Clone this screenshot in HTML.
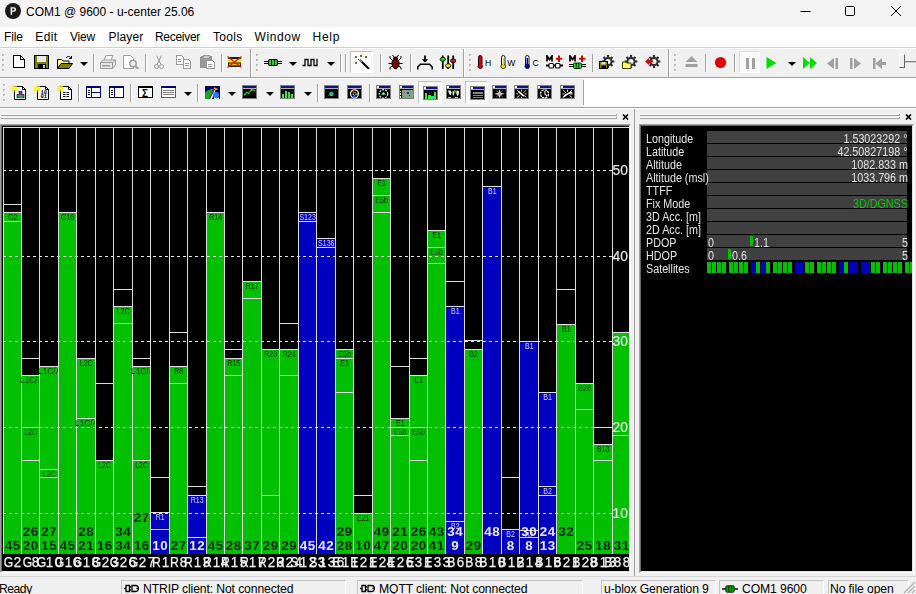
<!DOCTYPE html><html><head><meta charset="utf-8"><title>u-center</title><style>
*{box-sizing:border-box;margin:0;padding:0}
html,body{width:916px;height:594px;overflow:hidden;background:#f0f0f0;font-family:"Liberation Sans",sans-serif;}
.abs{position:absolute}
#root{position:relative;width:916px;height:594px;overflow:hidden;background:#f0f0f0}
#title{left:0;top:0;width:916px;height:27px;background:#f3f3f3}
#title .t{left:26px;top:5px;font-size:12px;letter-spacing:0px;color:#000;white-space:nowrap;line-height:15px}
#menu{left:0;top:27px;width:916px;height:20px;background:#fff}
#menu span{position:absolute;top:2.5px;font-size:12px;letter-spacing:-0.3px;color:#000;line-height:15px;white-space:nowrap}
.sep{position:absolute;width:1px;background:#a0a0a0}
.hl{position:absolute;height:1px;left:0;width:916px}
.grip{position:absolute;width:3px;}
.dd{position:absolute;width:0;height:0;margin-left:-0.5px;border-left:4px solid transparent;border-right:4px solid transparent;border-top:4.5px solid #000}
.ico{position:absolute}
#chart{left:2px;top:126px;width:627px;height:445px;background:#000;overflow:hidden}
.vl{position:absolute;top:1px;width:1px;height:427px;background:#dedede}
.hln{position:absolute;height:1px;background:#dedede}
.bar{position:absolute}
.dash{position:absolute;left:1px;height:1px;width:609px;background:repeating-linear-gradient(90deg,#e8e8e8 0,#e8e8e8 3px,transparent 3px,transparent 6px)}
.sl{position:absolute;font-size:8.8px;line-height:10px;height:10px;white-space:nowrap;overflow:hidden}
.num{position:absolute;font-weight:bold;font-size:13.4px;line-height:14px;text-align:center;white-space:nowrap;letter-spacing:0.45px;text-indent:0.45px}
.bl{position:absolute;top:430px;height:13px;font-size:14.2px;line-height:13px;color:#f0f0f0;-webkit-text-stroke:0.25px #f4f4f4;white-space:nowrap;display:flex}
.bl i{display:block;width:8.9px;text-align:center;font-style:normal;flex:none}
.bl i.L{transform:scaleX(0.86)}
.bl i.D{transform:scaleX(0.94)}
.bl i>b{display:inline-block;font-weight:normal;margin:0 -3px}
.ax{position:absolute;font-size:13.8px;line-height:14px;color:#e4e4e4;-webkit-text-stroke:0.2px #e4e4e4;white-space:nowrap}
#rp{left:641px;top:126px;width:271px;height:445px;background:#000;overflow:hidden}
#rp .lab{position:absolute;left:5px;font-size:12.5px;line-height:13px;color:#e8e8e8;white-space:nowrap;z-index:2;transform:scaleX(0.86);transform-origin:0 50%}
#rp .vb{position:absolute;left:66px;width:200px;height:12px;background:#404040}
#rp .val{position:absolute;right:4.4px;font-size:12.5px;line-height:13px;color:#e0e0e0;white-space:nowrap;text-align:right;transform:scaleX(0.86);transform-origin:100% 50%}
#status span{position:absolute;font-size:12.2px;letter-spacing:-0.12px;line-height:15px;white-space:nowrap;color:#000}
.pane{position:absolute;top:580px;height:16px;border:1px solid #c8c8c8;border-bottom:none}
</style></head><body><div id="root">
<div id="title" class="abs">
<svg class="abs" style="left:5px;top:3px" width="16" height="16" viewBox="0 0 16 16"><circle cx="8" cy="8" r="8" fill="#1a1a1a"/><path d="M5.6 4.2h3.2a2.3 2.3 0 0 1 0 4.6H7.1v3H5.6z M7.1 5.5v2h1.5a1 1 0 0 0 0-2z" fill="#fff" fill-rule="evenodd"/></svg>
<div class="abs t">COM1 @ 9600 - u-center 25.06</div>
<svg class="abs" style="left:795px;top:0" width="121" height="27" viewBox="0 0 121 27"><path d="M5.5 11.5h10" stroke="#000" stroke-width="1" fill="none"/><rect x="50.5" y="6.5" width="9" height="9" rx="1.2" fill="none" stroke="#000" stroke-width="1"/><path d="M96 6l10 10M106 6l-10 10" stroke="#000" stroke-width="1" fill="none"/></svg>
</div>
<div id="menu" class="abs">
<span style="left:4px;letter-spacing:-0.1px">File</span>
<span style="left:35.3px;letter-spacing:0.4px">Edit</span>
<span style="left:70px;letter-spacing:-0.25px">View</span>
<span style="left:108.5px;letter-spacing:0.14px">Player</span>
<span style="left:155px;letter-spacing:-0.3px">Receiver</span>
<span style="left:213px;letter-spacing:0.3px">Tools</span>
<span style="left:254.5px;letter-spacing:0.6px">Window</span>
<span style="left:312.5px;letter-spacing:0.75px">Help</span>
</div>
<div class="hl" style="top:47px;background:#d0d0d0"></div>
<div class="hl" style="top:48px;background:#fff"></div>
<div class="abs" style="left:0;top:49px;width:916px;height:28px;background:#f0f0f0"></div>
<div class="hl" style="top:77px;background:#a0a0a0"></div>
<div class="hl" style="top:78px;background:#fff"></div>
<div class="abs" style="left:0;top:79px;width:916px;height:28px;background:#fff"></div>
<div class="abs" style="left:0;top:79px;width:584px;height:28px;background:#f0f0f0"></div>
<div class="hl" style="top:107px;background:#a0a0a0"></div>
<div class="hl" style="top:108px;background:#fff;z-index:3"></div>
<div class="abs" style="left:2px;top:54px;width:2px;height:2px;background:#b4b4b4"></div><div class="abs" style="left:3px;top:55px;width:1px;height:1px;background:#d8d8d8"></div><div class="abs" style="left:2px;top:59px;width:2px;height:2px;background:#b4b4b4"></div><div class="abs" style="left:3px;top:60px;width:1px;height:1px;background:#d8d8d8"></div><div class="abs" style="left:2px;top:64px;width:2px;height:2px;background:#b4b4b4"></div><div class="abs" style="left:3px;top:65px;width:1px;height:1px;background:#d8d8d8"></div><div class="abs" style="left:2px;top:69px;width:2px;height:2px;background:#b4b4b4"></div><div class="abs" style="left:3px;top:70px;width:1px;height:1px;background:#d8d8d8"></div>
<svg class="ico" style="left:13px;top:55px" width="12" height="13" viewBox="0 0 12 13" shape-rendering="crispEdges"><path d="M0.5 0.5h7l4 4v8h-11z" fill="#fff" stroke="#000"/><path d="M7.5 0.5v4h4" fill="none" stroke="#000"/></svg>
<svg class="ico" style="left:34px;top:55px" width="15" height="14" viewBox="0 0 15 14" shape-rendering="crispEdges"><rect x="0.5" y="0.5" width="14" height="13" fill="#808000" stroke="#000"/><rect x="3" y="1" width="9" height="6" fill="#fff" stroke="#000" stroke-width="0"/><rect x="3" y="1" width="9" height="6" fill="#e8e8e8"/><rect x="4" y="9" width="8" height="5" fill="#000"/><rect x="9" y="10" width="2" height="3" fill="#c0c0c0"/></svg>
<svg class="ico" style="left:57px;top:55px" width="16" height="14" viewBox="0 0 16 14"><path d="M0.5 13.5v-9h4l1.5 1.5h6v2.5" fill="#ffff80" stroke="#000"/><path d="M0.5 13.5l3.5-5h11.5l-3.5 5z" fill="#808000" stroke="#000"/><path d="M9 3c1.5-2 4-2 5 0M14.5 1v2.5h-2.5" fill="none" stroke="#000"/></svg>
<div class="dd" style="left:80px;top:62px"></div>
<div class="sep" style="left:93px;top:54px;height:18px"></div><div class="sep" style="left:94px;top:54px;height:18px;background:#fff"></div>
<svg class="ico" style="left:100px;top:55px" width="16" height="14" viewBox="0 0 16 14"><path d="M4 5l2-4.5h7l-2 4.5" fill="#fff" stroke="#9a9a9a"/><path d="M0.5 7.5l3-2.5h12v5l-3 3.5h-12z" fill="#e8e8e8" stroke="#9a9a9a"/><path d="M0.5 7.5h12v6M12.5 7.5l3-2.5" fill="none" stroke="#9a9a9a"/><rect x="2" y="10" width="8" height="1.5" fill="#9a9a9a"/></svg>
<svg class="ico" style="left:123px;top:55px" width="16" height="14" viewBox="0 0 16 14"><path d="M0.5 0.5h7l3 3v10h-10z" fill="#fff" stroke="#9a9a9a"/><circle cx="10" cy="8.5" r="3.2" fill="#f0f0f0" stroke="#9a9a9a" stroke-width="1.4"/><path d="M12.3 11l3 3" stroke="#9a9a9a" stroke-width="2"/></svg>
<div class="sep" style="left:145px;top:54px;height:18px"></div><div class="sep" style="left:146px;top:54px;height:18px;background:#fff"></div>
<svg class="ico" style="left:154px;top:55px" width="10" height="14" viewBox="0 0 10 14"><path d="M2.5 0.5l4.5 9M7.5 0.5l-4.5 9" stroke="#9a9a9a" fill="none"/><circle cx="2.5" cy="11.5" r="2" fill="none" stroke="#9a9a9a"/><circle cx="7.5" cy="11.5" r="2" fill="none" stroke="#9a9a9a"/></svg>
<svg class="ico" style="left:176px;top:55px" width="15" height="14" viewBox="0 0 15 14" shape-rendering="crispEdges"><path d="M0.5 0.5h5l2 2v7h-7z" fill="#fff" stroke="#9a9a9a"/><path d="M7.5 4.5h5l2 2v7h-7z" fill="#fff" stroke="#9a9a9a"/><path d="M2 4h3M2 6h3M9 8h4M9 10h4" stroke="#9a9a9a"/></svg>
<svg class="ico" style="left:200px;top:55px" width="15" height="14" viewBox="0 0 15 14" shape-rendering="crispEdges"><rect x="0.5" y="1.5" width="11" height="11" rx="1.5" fill="#989898" stroke="#909090"/><rect x="3" y="0.5" width="6" height="3" fill="#c8c8c8" stroke="#9a9a9a"/><path d="M6.5 5.5h6l2 2v6h-8z" fill="#fff" stroke="#9a9a9a"/><path d="M8 9h4M8 11h4" stroke="#9a9a9a"/></svg>
<div class="sep" style="left:221px;top:54px;height:18px"></div><div class="sep" style="left:222px;top:54px;height:18px;background:#fff"></div>
<svg class="ico" style="left:227px;top:55px" width="15" height="14" viewBox="0 0 15 14"><rect x="1" y="2" width="13" height="10" fill="#202000"/><rect x="1" y="4" width="13" height="3.500" fill="#ffe020"/><rect x="2" y="8.500" width="11" height="2" fill="#e0c000"/><path d="M0.5 1.500l14 11M14.5 1.500l-14 11" stroke="#e02020" stroke-width="1.3"/></svg>
<div class="sep" style="left:250px;top:49px;height:28px"></div><div class="sep" style="left:251px;top:49px;height:28px;background:#fff"></div>
<div class="abs" style="left:256px;top:54px;width:2px;height:2px;background:#b4b4b4"></div><div class="abs" style="left:257px;top:55px;width:1px;height:1px;background:#d8d8d8"></div><div class="abs" style="left:256px;top:59px;width:2px;height:2px;background:#b4b4b4"></div><div class="abs" style="left:257px;top:60px;width:1px;height:1px;background:#d8d8d8"></div><div class="abs" style="left:256px;top:64px;width:2px;height:2px;background:#b4b4b4"></div><div class="abs" style="left:257px;top:65px;width:1px;height:1px;background:#d8d8d8"></div><div class="abs" style="left:256px;top:69px;width:2px;height:2px;background:#b4b4b4"></div><div class="abs" style="left:257px;top:70px;width:1px;height:1px;background:#d8d8d8"></div>
<svg class="ico" style="left:264px;top:59px" width="18" height="7" viewBox="0 0 18 7"><path d="M0 2.500h18M0 4.500h18" stroke="#000" stroke-width="1" shape-rendering="crispEdges"/><rect x="4.500" y="0.500" width="9" height="6" rx="1.500" fill="#30e030" stroke="#000" stroke-width="1.200"/><path d="M7.500 1v5M10.500 1v5" stroke="#003000" stroke-width="1.200"/></svg>
<div class="dd" style="left:289px;top:62px"></div>
<svg class="ico" style="left:302px;top:58px" width="16" height="9" viewBox="0 0 16 9"><path d="M0.500 7.500h2.500v-6h3v6h3v-6h3v6h3v-6h0.500" fill="none" stroke="#000" stroke-width="1.300"/></svg>
<div class="dd" style="left:327px;top:62px"></div>
<div class="sep" style="left:340px;top:54px;height:18px"></div><div class="sep" style="left:341px;top:54px;height:18px;background:#fff"></div>
<div class="sep" style="left:345px;top:54px;height:18px"></div><div class="sep" style="left:346px;top:54px;height:18px;background:#fff"></div>
<div class="abs" style="left:350px;top:51px;width:23px;height:22px;background:#fafafa;border:1px solid #c0c0c0;border-right-color:#fff;border-bottom-color:#fff"></div>
<svg class="ico" style="left:354px;top:55px" width="16" height="14" viewBox="0 0 16 14"><path d="M6 5l9 9" stroke="#000" stroke-width="2"/><path d="M6 5l2 2" stroke="#808080" stroke-width="2"/><path d="M1 2h2M2 1v2M7 0v2M6 1h2M11 2h2M12 1v2M1 8h2M2 7v2M4 4.5h1" stroke="#484000" stroke-width="1"/></svg>
<div class="sep" style="left:380px;top:54px;height:18px"></div><div class="sep" style="left:381px;top:54px;height:18px;background:#fff"></div>
<svg class="ico" style="left:388px;top:55px" width="15" height="15" viewBox="0 0 15 15"><path d="M4.500 5.500l-2.500-2.500v-2M10.500 5.500l2.500-2.500v-2M4 8.500h-3.500M11 8.500h3.500M4.500 11l-2.500 1.500v2M10.500 11l2.500 1.500v2M6 2l-1.500-2M9 2l1.500-2" stroke="#000" stroke-width="1" fill="none"/><ellipse cx="7.500" cy="8.500" rx="3.600" ry="5.200" fill="#780808" stroke="#000" stroke-width="1"/><ellipse cx="7.500" cy="3.300" rx="2.300" ry="1.800" fill="#300000"/><path d="M7.500 5v8.500" stroke="#300000" stroke-width="0.800"/></svg>
<div class="sep" style="left:410px;top:54px;height:18px"></div><div class="sep" style="left:411px;top:54px;height:18px;background:#fff"></div>
<svg class="ico" style="left:417px;top:55px" width="16" height="15" viewBox="0 0 16 15"><path d="M8 0.500v5" stroke="#000" stroke-width="1.800"/><path d="M4.800 4.200h6.400l-3.200 3.300z" fill="#000"/><path d="M0.800 14.500v-2.500l2.700-2.700h9l2.700 2.700v2.500" fill="none" stroke="#000" stroke-width="1.500"/></svg>
<svg class="ico" style="left:439px;top:55px" width="17" height="15" viewBox="0 0 17 15"><path d="M3.800 0.500v13.500M9.200 0.500v13.500M14.200 0.500v13.500" stroke="#000" stroke-width="1.800"/><ellipse cx="3.800" cy="4.300" rx="2.700" ry="2" fill="#20d020" stroke="#000" stroke-width="0.800"/><ellipse cx="9.200" cy="10.700" rx="2.700" ry="2" fill="#f0e020" stroke="#000" stroke-width="0.800"/><ellipse cx="14.200" cy="5.800" rx="2.700" ry="2" fill="#e01010" stroke="#000" stroke-width="0.800"/></svg>
<div class="sep" style="left:463px;top:49px;height:28px"></div><div class="sep" style="left:464px;top:49px;height:28px;background:#fff"></div>
<div class="abs" style="left:469px;top:54px;width:2px;height:2px;background:#b4b4b4"></div><div class="abs" style="left:470px;top:55px;width:1px;height:1px;background:#d8d8d8"></div><div class="abs" style="left:469px;top:59px;width:2px;height:2px;background:#b4b4b4"></div><div class="abs" style="left:470px;top:60px;width:1px;height:1px;background:#d8d8d8"></div><div class="abs" style="left:469px;top:64px;width:2px;height:2px;background:#b4b4b4"></div><div class="abs" style="left:470px;top:65px;width:1px;height:1px;background:#d8d8d8"></div><div class="abs" style="left:469px;top:69px;width:2px;height:2px;background:#b4b4b4"></div><div class="abs" style="left:470px;top:70px;width:1px;height:1px;background:#d8d8d8"></div>
<svg class="ico" style="left:477px;top:55px" width="16" height="14" viewBox="0 0 16 14"><rect x="1.500" y="0.500" width="3.500" height="10.500" rx="1.700" fill="#d80000" stroke="#000" stroke-width="0.900"/><circle cx="3.250" cy="11.300" r="2.300" fill="#d80000" stroke="#000" stroke-width="0.700"/><rect x="2.500" y="3" width="1.500" height="8" fill="#d80000"/><text x="8" y="11" font-family="Liberation Sans" font-size="8.600" fill="#000">H</text></svg>
<svg class="ico" style="left:500px;top:55px" width="16" height="14" viewBox="0 0 16 14"><rect x="1.500" y="0.500" width="3.500" height="10.500" rx="1.700" fill="#fff" stroke="#000" stroke-width="0.900"/><circle cx="3.250" cy="11.300" r="2.300" fill="#e8e000" stroke="#000" stroke-width="0.700"/><rect x="2.500" y="3" width="1.500" height="8" fill="#e8e000"/><text x="7.3" y="11" font-family="Liberation Sans" font-size="8.600" fill="#000">W</text></svg>
<svg class="ico" style="left:524px;top:55px" width="16" height="14" viewBox="0 0 16 14"><rect x="1.500" y="0.500" width="3.500" height="10.500" rx="1.700" fill="#fff" stroke="#000" stroke-width="0.900"/><circle cx="3.250" cy="11.300" r="2.300" fill="#0000c0" stroke="#000" stroke-width="0.700"/><rect x="2.500" y="3" width="1.500" height="8" fill="#0000c0"/><text x="8.5" y="11" font-family="Liberation Sans" font-size="8.600" fill="#000">C</text></svg>
<svg class="ico" style="left:546px;top:55px" width="17" height="14" viewBox="0 0 17 14"><rect x="9" y="0" width="8" height="7.500" fill="#fff"/><path d="M1 6.500v-5.500l2.500 3.500 2.500-3.500v5.500" stroke="#000" stroke-width="1.700" fill="none"/><path d="M13 0.500v6.500M9.800 3.700h6.500" stroke="#e00000" stroke-width="2"/><path d="M0 10.500h3M14 10.500h3M7 10.500h3" stroke="#000" stroke-width="2"/><rect x="3" y="8.500" width="4.500" height="4.500" rx="1" fill="#fff" stroke="#000" stroke-width="1.100"/><rect x="9.500" y="8.500" width="4.500" height="4.500" rx="1" fill="#fff" stroke="#000" stroke-width="1.100"/></svg>
<svg class="ico" style="left:569px;top:55px" width="17" height="14" viewBox="0 0 17 14"><rect x="9" y="0" width="8" height="7.500" fill="#fff"/><path d="M1 6.500v-5.500l2.500 3.500 2.500-3.500v5.500" stroke="#000" stroke-width="1.700" fill="none"/><path d="M13 0.500v6.500M9.800 3.700h6.500" stroke="#e00000" stroke-width="2"/><path d="M0 9.500h17M0 11.500h17" stroke="#000" stroke-width="1"/><rect x="4.500" y="8" width="8" height="5.500" rx="1.200" fill="#30e030" stroke="#003000" stroke-width="1"/><path d="M7.200 8v5.500M9.800 8v5.500" stroke="#003000"/></svg>
<div class="sep" style="left:592px;top:54px;height:18px"></div><div class="sep" style="left:593px;top:54px;height:18px;background:#fff"></div>
<svg class="ico" style="left:599px;top:55px" width="16" height="14" viewBox="0 0 16 14"><path d="M15.4 5.4L15.4 7.6L13.5 7.6L12.9 8.9L14.3 10.2L12.7 11.8L11.4 10.4L10.1 11.0L10.1 12.9L7.9 12.9L7.9 11.0L6.6 10.4L5.3 11.8L3.7 10.2L5.1 8.9L4.5 7.6L2.6 7.6L2.6 5.4L4.5 5.4L5.1 4.1L3.7 2.8L5.3 1.2L6.6 2.6L7.9 2.0L7.9 0.1L10.1 0.1L10.1 2.0L11.4 2.6L12.7 1.2L14.3 2.8L12.9 4.1L13.5 5.4z" fill="#303030"/><circle cx="9" cy="6.5" r="2.6" fill="#e8e8e8"/><circle cx="9.6" cy="6" r="1.2" fill="#fff"/><rect x="0.5" y="6.5" width="8" height="7" fill="#808000" stroke="#000"/><rect x="2.5" y="7" width="4" height="2.5" fill="#e0e0e0"/><rect x="2.5" y="10.5" width="4.5" height="3" fill="#000"/></svg>
<svg class="ico" style="left:622px;top:55px" width="16" height="14" viewBox="0 0 16 14"><path d="M15.4 5.4L15.4 7.6L13.5 7.6L12.9 8.9L14.3 10.2L12.7 11.8L11.4 10.4L10.1 11.0L10.1 12.9L7.9 12.9L7.9 11.0L6.6 10.4L5.3 11.8L3.7 10.2L5.1 8.9L4.5 7.6L2.6 7.6L2.6 5.4L4.5 5.4L5.1 4.1L3.7 2.8L5.3 1.2L6.6 2.6L7.9 2.0L7.9 0.1L10.1 0.1L10.1 2.0L11.4 2.6L12.7 1.2L14.3 2.8L12.9 4.1L13.5 5.4z" fill="#303030"/><circle cx="9" cy="6.5" r="2.6" fill="#e8e8e8"/><circle cx="9.6" cy="6" r="1.2" fill="#fff"/><path d="M0.5 13.5v-6.500h3l1 1h4.500v5.500z" fill="#ffff70" stroke="#404000"/></svg>
<svg class="ico" style="left:645px;top:55px" width="16" height="14" viewBox="0 0 16 14"><path d="M15.4 5.4L15.4 7.6L13.5 7.6L12.9 8.9L14.3 10.2L12.7 11.8L11.4 10.4L10.1 11.0L10.1 12.9L7.9 12.9L7.9 11.0L6.6 10.4L5.3 11.8L3.7 10.2L5.1 8.9L4.5 7.6L2.6 7.6L2.6 5.4L4.5 5.4L5.1 4.1L3.7 2.8L5.3 1.2L6.6 2.6L7.9 2.0L7.9 0.1L10.1 0.1L10.1 2.0L11.4 2.6L12.7 1.2L14.3 2.8L12.9 4.1L13.5 5.4z" fill="#303030"/><circle cx="9" cy="6.5" r="2.6" fill="#e8e8e8"/><circle cx="9.6" cy="6" r="1.2" fill="#fff"/><path d="M0 6.5l4-3.5v2.5h4v2h-4v2.5z" fill="#e00000"/></svg>
<div class="sep" style="left:668px;top:49px;height:28px"></div><div class="sep" style="left:669px;top:49px;height:28px;background:#fff"></div>
<div class="abs" style="left:674px;top:54px;width:2px;height:2px;background:#b4b4b4"></div><div class="abs" style="left:675px;top:55px;width:1px;height:1px;background:#d8d8d8"></div><div class="abs" style="left:674px;top:59px;width:2px;height:2px;background:#b4b4b4"></div><div class="abs" style="left:675px;top:60px;width:1px;height:1px;background:#d8d8d8"></div><div class="abs" style="left:674px;top:64px;width:2px;height:2px;background:#b4b4b4"></div><div class="abs" style="left:675px;top:65px;width:1px;height:1px;background:#d8d8d8"></div><div class="abs" style="left:674px;top:69px;width:2px;height:2px;background:#b4b4b4"></div><div class="abs" style="left:675px;top:70px;width:1px;height:1px;background:#d8d8d8"></div>
<svg class="ico" style="left:685px;top:56px" width="13" height="11" viewBox="0 0 13 11"><path d="M6.5 0l6 6h-12z" fill="#a0a0a0"/><rect x="0.5" y="8" width="12" height="3" fill="#a0a0a0"/></svg>
<div class="sep" style="left:705px;top:54px;height:18px"></div><div class="sep" style="left:706px;top:54px;height:18px;background:#fff"></div>
<svg class="ico" style="left:714px;top:56px" width="13" height="13" viewBox="0 0 13 13"><circle cx="6.5" cy="6.5" r="5.6" fill="#e00000"/></svg>
<div class="sep" style="left:734px;top:54px;height:18px"></div><div class="sep" style="left:735px;top:54px;height:18px;background:#fff"></div>
<div class="abs" style="left:739px;top:51px;width:21px;height:22px;background:#f8f8f8;border:1px solid #dcdcdc;border-right-color:#fff;border-bottom-color:#fff"></div>
<svg class="ico" style="left:746px;top:58px" width="9" height="11" viewBox="0 0 9 11" shape-rendering="crispEdges"><rect x="0" y="0" width="3" height="11" fill="#a0a0a0"/><rect x="5.5" y="0" width="3" height="11" fill="#a0a0a0"/></svg>
<svg class="ico" style="left:766px;top:57px" width="11" height="12" viewBox="0 0 11 12"><path d="M0.5 0l10 6-10 6z" fill="#00e000"/></svg>
<div class="dd" style="left:788px;top:62px"></div>
<svg class="ico" style="left:803px;top:57px" width="14" height="12" viewBox="0 0 14 12"><path d="M0 0l7 6-7 6zM7 0l7 6-7 6z" fill="#00e000"/></svg>
<svg class="ico" style="left:827px;top:58px" width="11" height="11" viewBox="0 0 11 11"><path d="M7 0v11l-7-5.5z" fill="#a0a0a0"/><rect x="8.5" y="0" width="2.5" height="11" fill="#a0a0a0"/></svg>
<svg class="ico" style="left:850px;top:58px" width="11" height="11" viewBox="0 0 11 11"><rect x="0" y="0" width="2.5" height="11" fill="#a0a0a0"/><path d="M4 0v11l7-5.5z" fill="#a0a0a0"/></svg>
<svg class="ico" style="left:873px;top:58px" width="13" height="11" viewBox="0 0 13 11"><rect x="0" y="0" width="2.5" height="11" fill="#a0a0a0"/><path d="M9 0v11l-6.5-5.5z" fill="#a0a0a0"/><rect x="8" y="4" width="5" height="3" fill="#a0a0a0"/></svg>
<div class="abs" style="left:903px;top:61px;width:13px;height:1px;background:#808080"></div><div class="abs" style="left:903px;top:62px;width:13px;height:1px;background:#d0d0d0"></div>
<div class="abs" style="left:899px;top:54px;width:6px;height:14px;background:#f0f0f0;border:1px solid #fff;border-right-color:#606060;border-bottom-color:#606060"></div>
<div class="abs" style="left:3px;top:84px;width:2px;height:2px;background:#b4b4b4"></div><div class="abs" style="left:4px;top:85px;width:1px;height:1px;background:#d8d8d8"></div><div class="abs" style="left:3px;top:89px;width:2px;height:2px;background:#b4b4b4"></div><div class="abs" style="left:4px;top:90px;width:1px;height:1px;background:#d8d8d8"></div><div class="abs" style="left:3px;top:94px;width:2px;height:2px;background:#b4b4b4"></div><div class="abs" style="left:4px;top:95px;width:1px;height:1px;background:#d8d8d8"></div><div class="abs" style="left:3px;top:99px;width:2px;height:2px;background:#b4b4b4"></div><div class="abs" style="left:4px;top:100px;width:1px;height:1px;background:#d8d8d8"></div>
<svg class="ico" style="left:11px;top:85px" width="16" height="15" viewBox="0 0 16 15"><path d="M3.500 1.500h8l3 3v10h-11z" fill="#fff" stroke="#000"/><path d="M11.500 1.500v3h3" fill="none" stroke="#000"/><path d="M3 0v7M-0.500 3.500h7M0.500 1l5 5M5.500 1l-5 5" stroke="#f0f000" stroke-width="1.100"/><circle cx="3" cy="3.500" r="1.300" fill="#ffff80"/><rect x="8" y="6.500" width="3" height="3" fill="#e000e0" stroke="#000" stroke-width="0.600"/><rect x="6" y="9.500" width="7" height="3.300" fill="#00b0b0" stroke="#000" stroke-width="0.600"/><rect x="8" y="9.500" width="3" height="3.300" fill="#e06000" opacity="0.700"/></svg>
<svg class="ico" style="left:34px;top:85px" width="16" height="15" viewBox="0 0 16 15"><path d="M3.500 1.500h8l3 3v10h-11z" fill="#fff" stroke="#000"/><path d="M11.500 1.500v3h3" fill="none" stroke="#000"/><path d="M3 0v7M-0.500 3.500h7M0.500 1l5 5M5.500 1l-5 5" stroke="#f0f000" stroke-width="1.100"/><circle cx="3" cy="3.500" r="1.300" fill="#ffff80"/><text x="6.500" y="8.500" font-family="Liberation Mono" font-size="5.500" font-weight="bold" fill="#000">10</text><text x="6.500" y="13.300" font-family="Liberation Mono" font-size="5.500" font-weight="bold" fill="#000">01</text></svg>
<svg class="ico" style="left:57px;top:85px" width="16" height="15" viewBox="0 0 16 15"><path d="M3.500 1.500h8l3 3v10h-11z" fill="#fff" stroke="#000"/><path d="M11.500 1.500v3h3" fill="none" stroke="#000"/><path d="M3 0v7M-0.500 3.500h7M0.500 1l5 5M5.500 1l-5 5" stroke="#f0f000" stroke-width="1.100"/><circle cx="3" cy="3.500" r="1.300" fill="#ffff80"/><path d="M6 7.500h6.500M6 9.500h6.500M6 11.500h6.500" stroke="#000" stroke-dasharray="2.500 1"/></svg>
<div class="sep" style="left:78px;top:84px;height:18px"></div><div class="sep" style="left:79px;top:84px;height:18px;background:#fff"></div>
<svg class="ico" style="left:86px;top:86px" width="15" height="12" viewBox="0 0 15 12" shape-rendering="crispEdges"><rect x="0.5" y="0.5" width="14" height="11" fill="#fff" stroke="#000080"/><rect x="0" y="0" width="15" height="2" fill="#000080"/><path d="M5.5 1v11M5.5 6.5h9" stroke="#000080"/><path d="M2 4h2M2 6h2M2 8h2" stroke="#000"/></svg>
<svg class="ico" style="left:109px;top:86px" width="15" height="12" viewBox="0 0 15 12" shape-rendering="crispEdges"><rect x="0.5" y="0.5" width="14" height="11" fill="#fff" stroke="#000080"/><rect x="0" y="0" width="15" height="2" fill="#000080"/><path d="M5.5 1v11" stroke="#000080"/><path d="M2 4h2M2 6h2M2 8h2" stroke="#000"/></svg>
<div class="sep" style="left:130px;top:84px;height:18px"></div><div class="sep" style="left:131px;top:84px;height:18px;background:#fff"></div>
<svg class="ico" style="left:138px;top:86px" width="15" height="12" viewBox="0 0 15 12"><rect x="0.5" y="0.5" width="14" height="11" fill="#fff" stroke="#000"/><rect x="0" y="0" width="15" height="2" fill="#000"/><text x="4" y="10.5" font-family="Liberation Sans" font-weight="bold" font-size="10" fill="#000">Σ</text></svg>
<svg class="ico" style="left:161px;top:86px" width="15" height="12" viewBox="0 0 15 12" shape-rendering="crispEdges"><rect x="0.5" y="0.5" width="14" height="11" fill="#fff" stroke="#606060"/><rect x="0" y="0" width="15" height="2" fill="#000080"/><path d="M2 4.5h11M2 6.5h11M2 8.5h11" stroke="#808080"/></svg>
<div class="dd" style="left:184px;top:92px"></div>
<div class="sep" style="left:197px;top:84px;height:18px"></div><div class="sep" style="left:198px;top:84px;height:18px;background:#fff"></div>
<svg class="ico" style="left:205px;top:86px" width="15" height="13" viewBox="0 0 15 13"><rect x="0" y="0" width="15" height="13" fill="#000060"/><path d="M0 13V7C2 4 5 3 8 3L5 13z" fill="#20a020"/><path d="M4 13L9 2.500h2L7 13z" fill="#fff"/><path d="M4.500 13L9.500 3" stroke="#000" stroke-width="1"/><circle cx="11" cy="9" r="3" fill="#2080ff"/><path d="M9 11a3 3 0 0 0 5 0v2h-5z" fill="#fff"/><path d="M9 2l3.500 1.500" stroke="#e0a000" stroke-width="1.5"/></svg>
<div class="dd" style="left:228px;top:92px"></div>
<svg class="ico" style="left:242px;top:85px" width="15" height="14" viewBox="0 0 15 14" shape-rendering="crispEdges"><rect x="0" y="0" width="15" height="14" fill="#000"/><rect x="0.5" y="0.5" width="14" height="13" fill="#000" stroke="#808080"/><rect x="1" y="1" width="13" height="2" fill="#101090"/><rect x="1" y="3" width="13" height="1" fill="#b0b0b0"/><g transform="scale(0.9375 0.9333)"><path d="M2 11l3-3 2 1 3-4 4 1" stroke="#00e000" stroke-width="1.3" fill="none" shape-rendering="auto"/><path d="M9 6l3-1" stroke="#e0a000" stroke-width="1" shape-rendering="auto"/></g></svg>
<div class="dd" style="left:266px;top:92px"></div>
<svg class="ico" style="left:280px;top:85px" width="15" height="14" viewBox="0 0 15 14" shape-rendering="crispEdges"><rect x="0" y="0" width="15" height="14" fill="#000"/><rect x="0.5" y="0.5" width="14" height="13" fill="#000" stroke="#808080"/><rect x="1" y="1" width="13" height="2" fill="#101090"/><rect x="1" y="3" width="13" height="1" fill="#b0b0b0"/><g transform="scale(0.9375 0.9333)"><rect x="2.500" y="10" width="2" height="4" fill="#30f030"/><rect x="5.500" y="6" width="2.200" height="8" fill="#30f030"/><rect x="8.700" y="7" width="2.200" height="7" fill="#30f030"/><rect x="12" y="10" width="2" height="4" fill="#30f030"/></g></svg>
<div class="dd" style="left:304px;top:92px"></div>
<div class="sep" style="left:317px;top:84px;height:18px"></div><div class="sep" style="left:318px;top:84px;height:18px;background:#fff"></div>
<svg class="ico" style="left:324px;top:85px" width="15" height="14" viewBox="0 0 15 14" shape-rendering="crispEdges"><rect x="0" y="0" width="15" height="14" fill="#000"/><rect x="0.5" y="0.5" width="14" height="13" fill="#000" stroke="#808080"/><rect x="1" y="1" width="13" height="2" fill="#101090"/><rect x="1" y="3" width="13" height="1" fill="#b0b0b0"/><g transform="scale(0.9375 0.9333)"><path d="M6 8l3-1 1.500 2-1 2.500-3 .500-1-2z" fill="#20e040" shape-rendering="auto"/><circle cx="8.800" cy="9" r="1.100" fill="#2080ff" shape-rendering="auto"/><path d="M4 12l2-1.500" stroke="#c02020" shape-rendering="auto"/></g></svg>
<svg class="ico" style="left:347px;top:85px" width="15" height="14" viewBox="0 0 15 14" shape-rendering="crispEdges"><rect x="0" y="0" width="15" height="14" fill="#000"/><rect x="0.5" y="0.5" width="14" height="13" fill="#000" stroke="#808080"/><rect x="1" y="1" width="13" height="2" fill="#101090"/><rect x="1" y="3" width="13" height="1" fill="#b0b0b0"/><g transform="scale(0.9375 0.9333)"><circle cx="8" cy="9.500" r="4.300" fill="none" stroke="#f0f0f0" stroke-width="1.400" shape-rendering="auto"/><path d="M5.500 7.500l2-2" stroke="#e02020" stroke-width="1.500" shape-rendering="auto"/><path d="M10.500 9l1 2.500" stroke="#20d020" stroke-width="1.800" shape-rendering="auto"/><path d="M6 12.500h3.500" stroke="#2040e0" stroke-width="1.800" shape-rendering="auto"/><circle cx="8" cy="9.500" r="1.600" fill="none" stroke="#d0d0d0" stroke-width="0.800" shape-rendering="auto"/></g></svg>
<div class="sep" style="left:369px;top:84px;height:18px"></div><div class="sep" style="left:370px;top:84px;height:18px;background:#fff"></div>
<svg class="ico" style="left:376px;top:85px" width="15" height="14" viewBox="0 0 15 14" shape-rendering="crispEdges"><rect x="0" y="0" width="15" height="14" fill="#000"/><rect x="0.5" y="0.5" width="14" height="13" fill="#000" stroke="#808080"/><rect x="1" y="1" width="13" height="2" fill="#101090"/><rect x="1" y="3" width="13" height="1" fill="#b0b0b0"/><g transform="scale(0.9375 0.9333)"><rect x="1" y="1" width="2" height="2" fill="#fff"/><circle cx="8" cy="9.500" r="4.500" fill="none" stroke="#f0f0f0" stroke-width="1.300" stroke-dasharray="2 1.200" shape-rendering="auto"/><path d="M5.500 10.500l2.500-3.500 2.500 3.500z" fill="#30e030" shape-rendering="auto"/><path d="M7 9.500h2" stroke="#fff" shape-rendering="auto"/><circle cx="8" cy="13.500" r="0.800" fill="#e02020"/></g></svg>
<svg class="ico" style="left:399px;top:85px" width="15" height="14" viewBox="0 0 15 14" shape-rendering="crispEdges"><rect x="0" y="0" width="15" height="14" fill="#000"/><rect x="0.5" y="0.5" width="14" height="13" fill="#000" stroke="#808080"/><rect x="1" y="1" width="13" height="2" fill="#101090"/><rect x="1" y="3" width="13" height="1" fill="#b0b0b0"/><g transform="scale(0.9375 0.9333)"><rect x="1" y="1" width="2" height="2" fill="#fff"/><rect x="3" y="5" width="12" height="9" fill="#80a880"/><rect x="1" y="6" width="1.500" height="1.500" fill="#fff"/><rect x="1" y="9" width="1.500" height="1.500" fill="#fff"/><rect x="1" y="12" width="1.500" height="1.500" fill="#fff"/><rect x="5" y="7" width="1.500" height="1.500" fill="#c02020"/><rect x="9" y="8" width="1.500" height="1.500" fill="#2020c0"/><rect x="10.500" y="10.500" width="1.500" height="1.500" fill="#2020c0"/></g></svg>
<div class="abs" style="left:418px;top:81px;width:24px;height:23px;background:#fafafa;border:1px solid #c0c0c0;border-right-color:#fff;border-bottom-color:#fff"></div>
<svg class="ico" style="left:423px;top:86px" width="15" height="14" viewBox="0 0 15 14" shape-rendering="crispEdges"><rect x="0" y="0" width="15" height="14" fill="#000"/><rect x="0.5" y="0.5" width="14" height="13" fill="#000" stroke="#808080"/><rect x="1" y="1" width="13" height="2" fill="#101090"/><rect x="1" y="3" width="13" height="1" fill="#b0b0b0"/><g transform="scale(0.9375 0.9333)"><rect x="1" y="1" width="2" height="2" fill="#fff"/><rect x="2.500" y="8" width="2.200" height="6" fill="#30f030"/><rect x="5.800" y="10" width="2.200" height="4" fill="#30f030"/><rect x="9" y="11" width="2.200" height="3" fill="#30d0e0"/><rect x="12" y="6" width="2.200" height="8" fill="#30f030"/></g></svg>
<svg class="ico" style="left:446px;top:85px" width="15" height="14" viewBox="0 0 15 14" shape-rendering="crispEdges"><rect x="0" y="0" width="15" height="14" fill="#000"/><rect x="0.5" y="0.5" width="14" height="13" fill="#000" stroke="#808080"/><rect x="1" y="1" width="13" height="2" fill="#101090"/><rect x="1" y="3" width="13" height="1" fill="#b0b0b0"/><g transform="scale(0.9375 0.9333)"><rect x="1" y="1" width="2" height="2" fill="#fff"/><path d="M2 6h3l1 2-1 3-1.500-1zM7 6.500h2l-.500 5-1.500-1zM11 6l3 .500-.500 4-1.500 1.500-1-3z" fill="#e8e8e8" shape-rendering="auto"/><circle cx="9.500" cy="7" r="1.400" fill="#20e020" shape-rendering="auto"/><path d="M2 13.500h3M10 13.500h3" stroke="#c0c0c0"/></g></svg>
<div class="abs" style="left:465px;top:81px;width:23px;height:23px;background:#fafafa;border:1px solid #c0c0c0;border-right-color:#fff;border-bottom-color:#fff"></div>
<svg class="ico" style="left:470px;top:86px" width="15" height="14" viewBox="0 0 15 14" shape-rendering="crispEdges"><rect x="0" y="0" width="15" height="14" fill="#000"/><rect x="0.5" y="0.5" width="14" height="13" fill="#000" stroke="#808080"/><rect x="1" y="1" width="13" height="2" fill="#101090"/><rect x="1" y="3" width="13" height="1" fill="#b0b0b0"/><g transform="scale(0.9375 0.9333)"><rect x="1" y="1" width="2" height="2" fill="#fff"/><path d="M3 6.500h11M3 8.500h11M3 10.500h11M3 12.500h11" stroke="#909090"/><path d="M8 10.500h6" stroke="#30c0a0"/><path d="M8 12.500h6" stroke="#30a060"/></g></svg>
<svg class="ico" style="left:492px;top:85px" width="15" height="14" viewBox="0 0 15 14" shape-rendering="crispEdges"><rect x="0" y="0" width="15" height="14" fill="#000"/><rect x="0.5" y="0.5" width="14" height="13" fill="#000" stroke="#808080"/><rect x="1" y="1" width="13" height="2" fill="#101090"/><rect x="1" y="3" width="13" height="1" fill="#b0b0b0"/><g transform="scale(0.9375 0.9333)"><rect x="1" y="1" width="2" height="2" fill="#fff"/><path d="M8 4.500l1.300 3.700 4.200 1.300-4.200 1.300L8 14.500l-1.300-3.700L2.500 9.500l4.200-1.300z" fill="#d8d8d8" shape-rendering="auto"/><path d="M4.500 6l7 7M11.500 6l-7 7" stroke="#a0a0a0" stroke-width="0.800" shape-rendering="auto"/></g></svg>
<svg class="ico" style="left:514px;top:85px" width="15" height="14" viewBox="0 0 15 14" shape-rendering="crispEdges"><rect x="0" y="0" width="15" height="14" fill="#000"/><rect x="0.5" y="0.5" width="14" height="13" fill="#000" stroke="#808080"/><rect x="1" y="1" width="13" height="2" fill="#101090"/><rect x="1" y="3" width="13" height="1" fill="#b0b0b0"/><g transform="scale(0.9375 0.9333)"><rect x="1" y="1" width="2" height="2" fill="#fff"/><path d="M3 5.500l4 3.500M13 5.500l-3 3M3 13.500l3-2.500M13 13l-2.500-2M8 5v2M2.500 9.500h2M11.500 9.500h2M8 12.500v1.500" stroke="#e8e8e8" shape-rendering="auto"/><path d="M5 7l5.500 5" stroke="#fff" stroke-width="1.800" shape-rendering="auto"/></g></svg>
<svg class="ico" style="left:537px;top:85px" width="15" height="14" viewBox="0 0 15 14" shape-rendering="crispEdges"><rect x="0" y="0" width="15" height="14" fill="#000"/><rect x="0.5" y="0.5" width="14" height="13" fill="#000" stroke="#808080"/><rect x="1" y="1" width="13" height="2" fill="#101090"/><rect x="1" y="3" width="13" height="1" fill="#b0b0b0"/><g transform="scale(0.9375 0.9333)"><rect x="1" y="1" width="2" height="2" fill="#fff"/><circle cx="8" cy="9.500" r="4.300" fill="none" stroke="#f0f0f0" stroke-width="1.500" stroke-dasharray="2.500 0.800" shape-rendering="auto"/><path d="M8.500 6.500v3.500l2 1.500" stroke="#f0f0f0" stroke-width="1.200" fill="none" shape-rendering="auto"/></g></svg>
<svg class="ico" style="left:560px;top:85px" width="15" height="14" viewBox="0 0 15 14" shape-rendering="crispEdges"><rect x="0" y="0" width="15" height="14" fill="#000"/><rect x="0.5" y="0.5" width="14" height="13" fill="#000" stroke="#808080"/><rect x="1" y="1" width="13" height="2" fill="#101090"/><rect x="1" y="3" width="13" height="1" fill="#b0b0b0"/><g transform="scale(0.9375 0.9333)"><rect x="1" y="1" width="2" height="2" fill="#fff"/><path d="M3 5.500l3.500 3M13 5.500l-3.500 3M3 13.500l3-2.500M13 13.500l-3-2.500M8 5v2.500M2.500 9.500h2.500M11 9.500h2.500" stroke="#e8e8e8" shape-rendering="auto"/><path d="M4 13c2-3 5-4.500 9-5" stroke="#fff" stroke-width="1.600" fill="none" shape-rendering="auto"/></g></svg>
<div class="sep" style="left:583px;top:80px;height:25px"></div><div class="sep" style="left:584px;top:80px;height:25px;background:#fff"></div>
<div class="abs" style="left:0;top:108px;width:916px;height:18px;background:#f0f0f0"></div>
<div class="abs" style="left:1px;top:114px;width:616px;height:2px;background:#fff;border-bottom:1px solid #a0a0a0;border-right:1px solid #a0a0a0"></div><div class="abs" style="left:1px;top:117px;width:616px;height:2px;background:#fff;border-bottom:1px solid #a0a0a0;border-right:1px solid #a0a0a0"></div>
<div class="abs" style="left:640px;top:114px;width:260px;height:2px;background:#fff;border-bottom:1px solid #a0a0a0;border-right:1px solid #a0a0a0"></div><div class="abs" style="left:640px;top:117px;width:260px;height:2px;background:#fff;border-bottom:1px solid #a0a0a0;border-right:1px solid #a0a0a0"></div>
<svg class="abs" style="left:621.5px;top:114px" width="7" height="6" viewBox="0 0 7 6"><path d="M1 0.500l5 5M6 0.500l-5 5" stroke="#000" stroke-width="1.6"/></svg>
<svg class="abs" style="left:904.5px;top:114px" width="7" height="6" viewBox="0 0 7 6"><path d="M1 0.500l5 5M6 0.500l-5 5" stroke="#000" stroke-width="1.6"/></svg>
<div class="abs" style="left:634px;top:108px;width:1px;height:468px;background:#a0a0a0"></div>
<div class="abs" style="left:0;top:124px;width:631px;height:449px;border:1px solid #a0a0a0;border-right-color:#fff;border-bottom-color:#fff"></div>
<div class="abs" style="left:1px;top:125px;width:629px;height:447px;border:1px solid #696969;border-right-color:#e3e3e3;border-bottom-color:#e3e3e3"></div>
<div class="abs" style="left:639px;top:124px;width:275px;height:449px;border:1px solid #a0a0a0;border-right-color:#fff;border-bottom-color:#fff"></div>
<div class="abs" style="left:640px;top:125px;width:273px;height:447px;border:1px solid #696969;border-right-color:#e3e3e3;border-bottom-color:#e3e3e3"></div>
<div id="chart" class="abs">
<div class="bar" style="left:1px;top:86px;width:18px;height:342px;background:#00c000"></div>
<div class="bar" style="left:19px;top:249px;width:18px;height:179px;background:#00c000"></div>
<div class="bar" style="left:37px;top:240px;width:19px;height:188px;background:#00c000"></div>
<div class="bar" style="left:56px;top:86px;width:18px;height:342px;background:#00c000"></div>
<div class="bar" style="left:74px;top:232px;width:19px;height:196px;background:#00c000"></div>
<div class="bar" style="left:93px;top:334px;width:18px;height:94px;background:#00c000"></div>
<div class="bar" style="left:111px;top:180px;width:19px;height:248px;background:#00c000"></div>
<div class="bar" style="left:130px;top:240px;width:18px;height:188px;background:#00c000"></div>
<div class="bar" style="left:148px;top:386px;width:19px;height:42px;background:#0000c0"></div>
<div class="bar" style="left:167px;top:240px;width:18px;height:188px;background:#00c000"></div>
<div class="bar" style="left:185px;top:369px;width:19px;height:59px;background:#0000c0"></div>
<div class="bar" style="left:204px;top:86px;width:18px;height:342px;background:#00c000"></div>
<div class="bar" style="left:222px;top:232px;width:18px;height:196px;background:#00c000"></div>
<div class="bar" style="left:240px;top:155px;width:19px;height:273px;background:#00c000"></div>
<div class="bar" style="left:259px;top:223px;width:18px;height:205px;background:#00c000"></div>
<div class="bar" style="left:277px;top:223px;width:19px;height:205px;background:#00c000"></div>
<div class="bar" style="left:296px;top:86px;width:18px;height:342px;background:#0000c0"></div>
<div class="bar" style="left:314px;top:112px;width:19px;height:316px;background:#0000c0"></div>
<div class="bar" style="left:333px;top:223px;width:18px;height:205px;background:#00c000"></div>
<div class="bar" style="left:351px;top:387px;width:19px;height:41px;background:#00c000"></div>
<div class="bar" style="left:370px;top:52px;width:18px;height:376px;background:#00c000"></div>
<div class="bar" style="left:388px;top:292px;width:19px;height:136px;background:#00c000"></div>
<div class="bar" style="left:407px;top:249px;width:18px;height:179px;background:#00c000"></div>
<div class="bar" style="left:425px;top:104px;width:18px;height:324px;background:#00c000"></div>
<div class="bar" style="left:443px;top:180px;width:19px;height:248px;background:#0000c0"></div>
<div class="bar" style="left:462px;top:223px;width:18px;height:205px;background:#00c000"></div>
<div class="bar" style="left:480px;top:60px;width:19px;height:368px;background:#0000c0"></div>
<div class="bar" style="left:499px;top:403px;width:18px;height:25px;background:#0000c0"></div>
<div class="bar" style="left:517px;top:215px;width:19px;height:213px;background:#0000c0"></div>
<div class="bar" style="left:536px;top:266px;width:18px;height:162px;background:#0000c0"></div>
<div class="bar" style="left:554px;top:198px;width:19px;height:230px;background:#00c000"></div>
<div class="bar" style="left:573px;top:257px;width:18px;height:171px;background:#00c000"></div>
<div class="bar" style="left:591px;top:318px;width:19px;height:110px;background:#00c000"></div>
<div class="bar" style="left:610px;top:206px;width:18px;height:222px;background:#00c000"></div>
<div class="dash" style="top:44px"></div>
<div class="dash" style="top:130px"></div>
<div class="dash" style="top:215px"></div>
<div class="dash" style="top:301px"></div>
<div class="dash" style="top:387px"></div>
<div class="vl" style="left:1px"></div>
<div class="vl" style="left:19px"></div>
<div class="vl" style="left:37px"></div>
<div class="vl" style="left:56px"></div>
<div class="vl" style="left:74px"></div>
<div class="vl" style="left:93px"></div>
<div class="vl" style="left:111px"></div>
<div class="vl" style="left:130px"></div>
<div class="vl" style="left:148px"></div>
<div class="vl" style="left:167px"></div>
<div class="vl" style="left:185px"></div>
<div class="vl" style="left:204px"></div>
<div class="vl" style="left:222px"></div>
<div class="vl" style="left:240px"></div>
<div class="vl" style="left:259px"></div>
<div class="vl" style="left:277px"></div>
<div class="vl" style="left:296px"></div>
<div class="vl" style="left:314px"></div>
<div class="vl" style="left:333px"></div>
<div class="vl" style="left:351px"></div>
<div class="vl" style="left:370px"></div>
<div class="vl" style="left:388px"></div>
<div class="vl" style="left:407px"></div>
<div class="vl" style="left:425px"></div>
<div class="vl" style="left:443px"></div>
<div class="vl" style="left:462px"></div>
<div class="vl" style="left:480px"></div>
<div class="vl" style="left:499px"></div>
<div class="vl" style="left:517px"></div>
<div class="vl" style="left:536px"></div>
<div class="vl" style="left:554px"></div>
<div class="vl" style="left:573px"></div>
<div class="vl" style="left:591px"></div>
<div class="vl" style="left:610px"></div>
<div class="vl" style="left:628px"></div>
<div class="hln" style="left:1px;top:1px;width:628px"></div>
<div class="hln" style="left:1px;top:86px;width:19px"></div>
<div class="hln" style="left:1px;top:78px;width:19px"></div>
<div class="hln" style="left:1px;top:95px;width:19px"></div>
<div class="hln" style="left:19px;top:249px;width:19px"></div>
<div class="hln" style="left:19px;top:232px;width:19px"></div>
<div class="hln" style="left:19px;top:301px;width:19px"></div>
<div class="hln" style="left:19px;top:334px;width:19px"></div>
<div class="hln" style="left:37px;top:240px;width:20px"></div>
<div class="hln" style="left:37px;top:343px;width:20px"></div>
<div class="hln" style="left:37px;top:351px;width:20px"></div>
<div class="hln" style="left:56px;top:86px;width:19px"></div>
<div class="hln" style="left:74px;top:232px;width:20px"></div>
<div class="hln" style="left:74px;top:292px;width:20px"></div>
<div class="hln" style="left:93px;top:334px;width:19px"></div>
<div class="hln" style="left:93px;top:257px;width:19px"></div>
<div class="hln" style="left:111px;top:180px;width:20px"></div>
<div class="hln" style="left:111px;top:163px;width:20px"></div>
<div class="hln" style="left:111px;top:197px;width:20px"></div>
<div class="hln" style="left:130px;top:240px;width:19px"></div>
<div class="hln" style="left:130px;top:232px;width:19px"></div>
<div class="hln" style="left:130px;top:334px;width:19px"></div>
<div class="hln" style="left:148px;top:386px;width:20px"></div>
<div class="hln" style="left:148px;top:351px;width:20px"></div>
<div class="hln" style="left:148px;top:403px;width:20px"></div>
<div class="hln" style="left:167px;top:240px;width:19px"></div>
<div class="hln" style="left:167px;top:206px;width:19px"></div>
<div class="hln" style="left:167px;top:257px;width:19px"></div>
<div class="hln" style="left:185px;top:369px;width:20px"></div>
<div class="hln" style="left:185px;top:360px;width:20px"></div>
<div class="hln" style="left:185px;top:411px;width:20px"></div>
<div class="hln" style="left:204px;top:86px;width:19px"></div>
<div class="hln" style="left:222px;top:232px;width:19px"></div>
<div class="hln" style="left:222px;top:223px;width:19px"></div>
<div class="hln" style="left:222px;top:249px;width:19px"></div>
<div class="hln" style="left:240px;top:155px;width:20px"></div>
<div class="hln" style="left:240px;top:172px;width:20px"></div>
<div class="hln" style="left:259px;top:223px;width:19px"></div>
<div class="hln" style="left:259px;top:369px;width:19px"></div>
<div class="hln" style="left:277px;top:223px;width:20px"></div>
<div class="hln" style="left:277px;top:197px;width:20px"></div>
<div class="hln" style="left:277px;top:249px;width:20px"></div>
<div class="hln" style="left:296px;top:86px;width:19px"></div>
<div class="hln" style="left:296px;top:95px;width:19px"></div>
<div class="hln" style="left:314px;top:112px;width:20px"></div>
<div class="hln" style="left:314px;top:121px;width:20px"></div>
<div class="hln" style="left:333px;top:223px;width:19px"></div>
<div class="hln" style="left:333px;top:232px;width:19px"></div>
<div class="hln" style="left:333px;top:266px;width:19px"></div>
<div class="hln" style="left:351px;top:387px;width:20px"></div>
<div class="hln" style="left:351px;top:369px;width:20px"></div>
<div class="hln" style="left:370px;top:52px;width:19px"></div>
<div class="hln" style="left:370px;top:69px;width:19px"></div>
<div class="hln" style="left:370px;top:86px;width:19px"></div>
<div class="hln" style="left:388px;top:292px;width:20px"></div>
<div class="hln" style="left:388px;top:240px;width:20px"></div>
<div class="hln" style="left:388px;top:301px;width:20px"></div>
<div class="hln" style="left:388px;top:309px;width:20px"></div>
<div class="hln" style="left:407px;top:249px;width:19px"></div>
<div class="hln" style="left:407px;top:232px;width:19px"></div>
<div class="hln" style="left:407px;top:301px;width:19px"></div>
<div class="hln" style="left:407px;top:334px;width:19px"></div>
<div class="hln" style="left:425px;top:104px;width:19px"></div>
<div class="hln" style="left:425px;top:121px;width:19px"></div>
<div class="hln" style="left:425px;top:137px;width:19px"></div>
<div class="hln" style="left:443px;top:180px;width:20px"></div>
<div class="hln" style="left:443px;top:155px;width:20px"></div>
<div class="hln" style="left:443px;top:395px;width:20px"></div>
<div class="hln" style="left:462px;top:223px;width:19px"></div>
<div class="hln" style="left:462px;top:214px;width:19px"></div>
<div class="hln" style="left:480px;top:60px;width:20px"></div>
<div class="hln" style="left:499px;top:403px;width:19px"></div>
<div class="hln" style="left:499px;top:351px;width:19px"></div>
<div class="hln" style="left:517px;top:215px;width:20px"></div>
<div class="hln" style="left:517px;top:404px;width:20px"></div>
<div class="hln" style="left:517px;top:411px;width:20px"></div>
<div class="hln" style="left:536px;top:266px;width:19px"></div>
<div class="hln" style="left:536px;top:360px;width:19px"></div>
<div class="hln" style="left:536px;top:369px;width:19px"></div>
<div class="hln" style="left:554px;top:198px;width:20px"></div>
<div class="hln" style="left:554px;top:163px;width:20px"></div>
<div class="hln" style="left:573px;top:257px;width:19px"></div>
<div class="hln" style="left:573px;top:283px;width:19px"></div>
<div class="hln" style="left:591px;top:318px;width:20px"></div>
<div class="hln" style="left:591px;top:301px;width:20px"></div>
<div class="hln" style="left:591px;top:334px;width:20px"></div>
<div class="hln" style="left:610px;top:206px;width:19px"></div>
<div class="hln" style="left:610px;top:309px;width:19px"></div>
<div id="ctxt" style="position:absolute;left:0;top:0;width:627px;height:445px;will-change:transform">
<div class="sl" style="left:-0.12px;top:86px;width:21.25px;text-align:center;color:#003000;transform:scaleX(0.8)">G2</div>
<div class="sl" style="left:18px;top:249px;width:20.00px;text-align:left;color:#003000;transform:scaleX(0.95);transform-origin:0 50%">L1C/A</div>
<div class="sl" style="left:17.88px;top:301px;width:21.25px;text-align:center;color:#003000;transform:scaleX(0.8)">L2C</div>
<div class="sl" style="left:36px;top:240px;width:21.05px;text-align:left;color:#003000;transform:scaleX(0.95);transform-origin:0 50%">L1C/A</div>
<div class="sl" style="left:35.75px;top:343px;width:22.50px;text-align:center;color:#003000;transform:scaleX(0.8)">L2C</div>
<div class="sl" style="left:54.88px;top:86px;width:21.25px;text-align:center;color:#003000;transform:scaleX(0.8)">G16</div>
<div class="sl" style="left:72.75px;top:232px;width:22.50px;text-align:center;color:#003000;transform:scaleX(0.8)">L2C</div>
<div class="sl" style="left:73px;top:292px;width:21.05px;text-align:left;color:#003000;transform:scaleX(0.95);transform-origin:0 50%">L1C/A</div>
<div class="sl" style="left:91.88px;top:334px;width:21.25px;text-align:center;color:#003000;transform:scaleX(0.8)">L2C</div>
<div class="sl" style="left:109.75px;top:180px;width:22.50px;text-align:center;color:#003000;transform:scaleX(0.8)">L2C</div>
<div class="sl" style="left:129px;top:240px;width:20.00px;text-align:left;color:#003000;transform:scaleX(0.95);transform-origin:0 50%">L1C/A</div>
<div class="sl" style="left:128.88px;top:334px;width:21.25px;text-align:center;color:#003000;transform:scaleX(0.8)">L2C</div>
<div class="sl" style="left:146.75px;top:386px;width:22.50px;text-align:center;color:#d4d4ff;transform:scaleX(0.8)">R1</div>
<div class="sl" style="left:165.88px;top:240px;width:21.25px;text-align:center;color:#003000;transform:scaleX(0.8)">R8</div>
<div class="sl" style="left:183.75px;top:369px;width:22.50px;text-align:center;color:#d4d4ff;transform:scaleX(0.8)">R13</div>
<div class="sl" style="left:202.88px;top:86px;width:21.25px;text-align:center;color:#003000;transform:scaleX(0.8)">R14</div>
<div class="sl" style="left:220.88px;top:232px;width:21.25px;text-align:center;color:#003000;transform:scaleX(0.8)">R15</div>
<div class="sl" style="left:238.75px;top:155px;width:22.50px;text-align:center;color:#003000;transform:scaleX(0.8)">R17</div>
<div class="sl" style="left:257.88px;top:223px;width:21.25px;text-align:center;color:#003000;transform:scaleX(0.8)">R23</div>
<div class="sl" style="left:275.75px;top:223px;width:22.50px;text-align:center;color:#003000;transform:scaleX(0.8)">R24</div>
<div class="sl" style="left:294.88px;top:86px;width:21.25px;text-align:center;color:#d4d4ff;transform:scaleX(0.8)">S123</div>
<div class="sl" style="left:312.75px;top:112px;width:22.50px;text-align:center;color:#d4d4ff;transform:scaleX(0.8)">S136</div>
<div class="sl" style="left:331.88px;top:223px;width:21.25px;text-align:center;color:#003000;transform:scaleX(0.8)">E5b</div>
<div class="sl" style="left:331.88px;top:232px;width:21.25px;text-align:center;color:#003000;transform:scaleX(0.8)">E1</div>
<div class="sl" style="left:349.75px;top:387px;width:22.50px;text-align:center;color:#003000;transform:scaleX(0.8)">E21</div>
<div class="sl" style="left:368.88px;top:52px;width:21.25px;text-align:center;color:#003000;transform:scaleX(0.8)">E1</div>
<div class="sl" style="left:368.88px;top:69px;width:21.25px;text-align:center;color:#003000;transform:scaleX(0.8)">E5b</div>
<div class="sl" style="left:386.75px;top:292px;width:22.50px;text-align:center;color:#003000;transform:scaleX(0.8)">E1</div>
<div class="sl" style="left:386.75px;top:301px;width:22.50px;text-align:center;color:#003000;transform:scaleX(0.8)">E5b</div>
<div class="sl" style="left:405.88px;top:249px;width:21.25px;text-align:center;color:#003000;transform:scaleX(0.8)">E1</div>
<div class="sl" style="left:405.88px;top:301px;width:21.25px;text-align:center;color:#003000;transform:scaleX(0.8)">E5b</div>
<div class="sl" style="left:423.88px;top:104px;width:21.25px;text-align:center;color:#003000;transform:scaleX(0.8)">E1</div>
<div class="sl" style="left:423.88px;top:121px;width:21.25px;text-align:center;color:#003000;transform:scaleX(0.8)">E5b</div>
<div class="sl" style="left:441.75px;top:180px;width:22.50px;text-align:center;color:#d4d4ff;transform:scaleX(0.8)">B1</div>
<div class="sl" style="left:441.75px;top:395px;width:22.50px;text-align:center;color:#d4d4ff;transform:scaleX(0.8)">B2</div>
<div class="sl" style="left:460.88px;top:223px;width:21.25px;text-align:center;color:#003000;transform:scaleX(0.8)">B2</div>
<div class="sl" style="left:478.75px;top:60px;width:22.50px;text-align:center;color:#d4d4ff;transform:scaleX(0.8)">B1</div>
<div class="sl" style="left:497.88px;top:403px;width:21.25px;text-align:center;color:#d4d4ff;transform:scaleX(0.8)">B2</div>
<div class="sl" style="left:515.75px;top:215px;width:22.50px;text-align:center;color:#d4d4ff;transform:scaleX(0.8)">B1</div>
<div class="sl" style="left:515.75px;top:404px;width:22.50px;text-align:center;color:#d4d4ff;transform:scaleX(0.8)">B2</div>
<div class="sl" style="left:534.88px;top:266px;width:21.25px;text-align:center;color:#d4d4ff;transform:scaleX(0.8)">B1</div>
<div class="sl" style="left:534.88px;top:360px;width:21.25px;text-align:center;color:#d4d4ff;transform:scaleX(0.8)">B2</div>
<div class="sl" style="left:552.75px;top:198px;width:22.50px;text-align:center;color:#003000;transform:scaleX(0.8)">B1</div>
<div class="sl" style="left:571.88px;top:257px;width:21.25px;text-align:center;color:#003000;transform:scaleX(0.8)">B28</div>
<div class="sl" style="left:589.75px;top:318px;width:22.50px;text-align:center;color:#003000;transform:scaleX(0.8)">B13</div>
<div class="num" style="left:1px;top:413px;width:19px;color:#002800">45</div>
<div class="num" style="left:19px;top:413px;width:19px;color:#002800">20</div>
<div class="num" style="left:19px;top:399px;width:19px;color:#002800">26</div>
<div class="num" style="left:37px;top:413px;width:20px;color:#002800">15</div>
<div class="num" style="left:37px;top:399px;width:20px;color:#002800">27</div>
<div class="num" style="left:56px;top:413px;width:19px;color:#002800">45</div>
<div class="num" style="left:74px;top:413px;width:20px;color:#002800">21</div>
<div class="num" style="left:74px;top:399px;width:20px;color:#002800">28</div>
<div class="num" style="left:93px;top:413px;width:19px;color:#002800">16</div>
<div class="num" style="left:111px;top:413px;width:20px;color:#002800">34</div>
<div class="num" style="left:111px;top:399px;width:20px;color:#002800">34</div>
<div class="num" style="left:130px;top:413px;width:19px;color:#002800">16</div>
<div class="num" style="left:130px;top:385px;width:19px;color:#002800">27</div>
<div class="num" style="left:148px;top:413px;width:20px;color:#e8e8ff">10</div>
<div class="num" style="left:167px;top:413px;width:19px;color:#002800">27</div>
<div class="num" style="left:185px;top:413px;width:20px;color:#e8e8ff">12</div>
<div class="num" style="left:204px;top:413px;width:19px;color:#002800">45</div>
<div class="num" style="left:222px;top:413px;width:19px;color:#002800">28</div>
<div class="num" style="left:240px;top:413px;width:20px;color:#002800">37</div>
<div class="num" style="left:259px;top:413px;width:19px;color:#002800">29</div>
<div class="num" style="left:277px;top:413px;width:20px;color:#002800">29</div>
<div class="num" style="left:296px;top:413px;width:19px;color:#e8e8ff">45</div>
<div class="num" style="left:314px;top:413px;width:20px;color:#e8e8ff">42</div>
<div class="num" style="left:333px;top:413px;width:19px;color:#002800">28</div>
<div class="num" style="left:333px;top:399px;width:19px;color:#002800">29</div>
<div class="num" style="left:351px;top:413px;width:20px;color:#002800">10</div>
<div class="num" style="left:370px;top:413px;width:19px;color:#002800">47</div>
<div class="num" style="left:370px;top:399px;width:19px;color:#002800">49</div>
<div class="num" style="left:388px;top:413px;width:20px;color:#002800">20</div>
<div class="num" style="left:388px;top:399px;width:20px;color:#002800">21</div>
<div class="num" style="left:407px;top:413px;width:19px;color:#002800">20</div>
<div class="num" style="left:407px;top:399px;width:19px;color:#002800">26</div>
<div class="num" style="left:425px;top:413px;width:19px;color:#002800">41</div>
<div class="num" style="left:425px;top:399px;width:19px;color:#002800">43</div>
<div class="num" style="left:443px;top:413px;width:20px;color:#e8e8ff">9</div>
<div class="num" style="left:443px;top:399px;width:20px;color:#e8e8ff">34</div>
<div class="num" style="left:462px;top:413px;width:19px;color:#002800">29</div>
<div class="num" style="left:480px;top:399px;width:20px;color:#e8e8ff">48</div>
<div class="num" style="left:499px;top:413px;width:19px;color:#e8e8ff">8</div>
<div class="num" style="left:517px;top:413px;width:20px;color:#e8e8ff">8</div>
<div class="num" style="left:517px;top:399px;width:20px;color:#e8e8ff">30</div>
<div class="num" style="left:536px;top:413px;width:19px;color:#e8e8ff">13</div>
<div class="num" style="left:536px;top:399px;width:19px;color:#e8e8ff">24</div>
<div class="num" style="left:554px;top:399px;width:20px;color:#002800">32</div>
<div class="num" style="left:573px;top:413px;width:19px;color:#002800">25</div>
<div class="num" style="left:591px;top:413px;width:20px;color:#002800">18</div>
<div class="num" style="left:610px;top:413px;width:19px;color:#002800">31</div>
<div class="ax" style="left:610.5px;top:38px">50</div>
<div class="ax" style="left:610.5px;top:124px">40</div>
<div class="ax" style="left:610.5px;top:209px">30</div>
<div class="ax" style="left:610.5px;top:295px">20</div>
<div class="ax" style="left:610.5px;top:381px">10</div>
<div class="bl" style="left:2.12px;width:17.8px"><i class="L"><b>G</b></i><i class="D"><b>2</b></i></div>
<div class="bl" style="left:20.57px;width:17.8px"><i class="L"><b>G</b></i><i class="D"><b>8</b></i></div>
<div class="bl" style="left:34.57px;width:26.7px"><i class="L"><b>G</b></i><i class="D"><b>1</b></i><i class="D"><b>0</b></i></div>
<div class="bl" style="left:53.02px;width:26.7px"><i class="L"><b>G</b></i><i class="D"><b>1</b></i><i class="D"><b>6</b></i></div>
<div class="bl" style="left:71.47px;width:26.7px"><i class="L"><b>G</b></i><i class="D"><b>1</b></i><i class="D"><b>8</b></i></div>
<div class="bl" style="left:89.92px;width:26.7px"><i class="L"><b>G</b></i><i class="D"><b>2</b></i><i class="D"><b>3</b></i></div>
<div class="bl" style="left:108.38px;width:26.7px"><i class="L"><b>G</b></i><i class="D"><b>2</b></i><i class="D"><b>6</b></i></div>
<div class="bl" style="left:126.83px;width:26.7px"><i class="L"><b>G</b></i><i class="D"><b>2</b></i><i class="D"><b>7</b></i></div>
<div class="bl" style="left:149.72px;width:17.8px"><i class="L"><b>R</b></i><i class="D"><b>1</b></i></div>
<div class="bl" style="left:168.18px;width:17.8px"><i class="L"><b>R</b></i><i class="D"><b>8</b></i></div>
<div class="bl" style="left:182.18px;width:26.7px"><i class="L"><b>R</b></i><i class="D"><b>1</b></i><i class="D"><b>3</b></i></div>
<div class="bl" style="left:200.62px;width:26.7px"><i class="L"><b>R</b></i><i class="D"><b>1</b></i><i class="D"><b>4</b></i></div>
<div class="bl" style="left:219.08px;width:26.7px"><i class="L"><b>R</b></i><i class="D"><b>1</b></i><i class="D"><b>5</b></i></div>
<div class="bl" style="left:237.53px;width:26.7px"><i class="L"><b>R</b></i><i class="D"><b>1</b></i><i class="D"><b>7</b></i></div>
<div class="bl" style="left:255.97px;width:26.7px"><i class="L"><b>R</b></i><i class="D"><b>2</b></i><i class="D"><b>3</b></i></div>
<div class="bl" style="left:274.42px;width:26.7px"><i class="L"><b>R</b></i><i class="D"><b>2</b></i><i class="D"><b>4</b></i></div>
<div class="bl" style="left:288.43px;width:35.6px"><i class="L"><b>S</b></i><i class="D"><b>1</b></i><i class="D"><b>2</b></i><i class="D"><b>3</b></i></div>
<div class="bl" style="left:306.88px;width:35.6px"><i class="L"><b>S</b></i><i class="D"><b>1</b></i><i class="D"><b>3</b></i><i class="D"><b>6</b></i></div>
<div class="bl" style="left:329.77px;width:26.7px"><i class="L"><b>E</b></i><i class="D"><b>1</b></i><i class="D"><b>1</b></i></div>
<div class="bl" style="left:348.22px;width:26.7px"><i class="L"><b>E</b></i><i class="D"><b>2</b></i><i class="D"><b>1</b></i></div>
<div class="bl" style="left:366.67px;width:26.7px"><i class="L"><b>E</b></i><i class="D"><b>2</b></i><i class="D"><b>4</b></i></div>
<div class="bl" style="left:385.12px;width:26.7px"><i class="L"><b>E</b></i><i class="D"><b>2</b></i><i class="D"><b>6</b></i></div>
<div class="bl" style="left:403.57px;width:26.7px"><i class="L"><b>E</b></i><i class="D"><b>3</b></i><i class="D"><b>1</b></i></div>
<div class="bl" style="left:422.02px;width:26.7px"><i class="L"><b>E</b></i><i class="D"><b>3</b></i><i class="D"><b>3</b></i></div>
<div class="bl" style="left:444.93px;width:17.8px"><i class="L"><b>B</b></i><i class="D"><b>6</b></i></div>
<div class="bl" style="left:463.38px;width:17.8px"><i class="L"><b>B</b></i><i class="D"><b>8</b></i></div>
<div class="bl" style="left:477.37px;width:26.7px"><i class="L"><b>B</b></i><i class="D"><b>1</b></i><i class="D"><b>0</b></i></div>
<div class="bl" style="left:495.82px;width:26.7px"><i class="L"><b>B</b></i><i class="D"><b>1</b></i><i class="D"><b>2</b></i></div>
<div class="bl" style="left:514.27px;width:26.7px"><i class="L"><b>B</b></i><i class="D"><b>1</b></i><i class="D"><b>4</b></i></div>
<div class="bl" style="left:532.72px;width:26.7px"><i class="L"><b>B</b></i><i class="D"><b>1</b></i><i class="D"><b>6</b></i></div>
<div class="bl" style="left:551.17px;width:26.7px"><i class="L"><b>B</b></i><i class="D"><b>2</b></i><i class="D"><b>1</b></i></div>
<div class="bl" style="left:569.62px;width:26.7px"><i class="L"><b>B</b></i><i class="D"><b>2</b></i><i class="D"><b>8</b></i></div>
<div class="bl" style="left:588.07px;width:26.7px"><i class="L"><b>B</b></i><i class="D"><b>1</b></i><i class="D"><b>3</b></i></div>
<div class="bl" style="left:602.07px;width:35.6px"><i class="L"><b>B</b></i><i class="D"><b>8</b></i><i class="D"><b>8</b></i><i class="D"><b>8</b></i></div>
</div>
</div>
<div id="rp" class="abs"><div id="rtxt" style="position:absolute;left:0;top:0;width:271px;height:445px;will-change:transform">
<div class="lab" style="top:6.5px">Longitude</div>
<div class="vb" style="top:5px"></div>
<div class="val" style="top:6.5px;color:#e0e0e0">1.53023292 °</div>
<div class="lab" style="top:19.5px">Latitude</div>
<div class="vb" style="top:18px"></div>
<div class="val" style="top:19.5px;color:#e0e0e0">42.50827198 °</div>
<div class="lab" style="top:32.5px">Altitude</div>
<div class="vb" style="top:31px"></div>
<div class="val" style="top:32.5px;color:#e0e0e0">1082.833 m</div>
<div class="lab" style="top:45.5px">Altitude (msl)</div>
<div class="vb" style="top:44px"></div>
<div class="val" style="top:45.5px;color:#e0e0e0">1033.796 m</div>
<div class="lab" style="top:58.5px">TTFF</div>
<div class="vb" style="top:57px"></div>
<div class="lab" style="top:71.5px">Fix Mode</div>
<div class="vb" style="top:70px"></div>
<div class="val" style="top:71.5px;color:#00d000">3D/DGNSS</div>
<div class="lab" style="top:84.5px">3D Acc. [m]</div>
<div class="vb" style="top:83px"></div>
<div class="lab" style="top:97.5px">2D Acc. [m]</div>
<div class="vb" style="top:96px"></div>
<div class="lab" style="top:110.5px">PDOP</div>
<div class="vb" style="top:109px"></div>
<div class="lab" style="top:123.5px">HDOP</div>
<div class="vb" style="top:122px"></div>
<div class="lab" style="top:136.5px">Satellites</div>
<div class="val" style="top:110.5px;right:auto;left:67px;transform-origin:0 50%">0</div>
<div class="val" style="top:110.5px">5</div>
<div class="abs" style="left:109px;top:110px;width:3px;height:10px;background:#00c000"></div>
<div class="val" style="top:110.5px;right:auto;left:113px;transform-origin:0 50%">1.1</div>
<div class="val" style="top:123.5px;right:auto;left:67px;transform-origin:0 50%">0</div>
<div class="val" style="top:123.5px">5</div>
<div class="abs" style="left:87px;top:123px;width:3px;height:10px;background:#00c000"></div>
<div class="val" style="top:123.5px;right:auto;left:91px;transform-origin:0 50%">0.6</div>
<div class="abs" style="left:66px;top:136px;width:4px;height:11px;background:#00c000"></div>
<div class="abs" style="left:71px;top:136px;width:4px;height:11px;background:#00c000"></div>
<div class="abs" style="left:76px;top:136px;width:4px;height:11px;background:#00c000"></div>
<div class="abs" style="left:81px;top:136px;width:4px;height:11px;background:#00c000"></div>
<div class="abs" style="left:88px;top:136px;width:4px;height:11px;background:#00c000"></div>
<div class="abs" style="left:93px;top:136px;width:4px;height:11px;background:#00c000"></div>
<div class="abs" style="left:98px;top:136px;width:4px;height:11px;background:#00c000"></div>
<div class="abs" style="left:103px;top:136px;width:4px;height:11px;background:#00c000"></div>
<div class="abs" style="left:110px;top:136px;width:4px;height:11px;background:#0000c0"></div>
<div class="abs" style="left:115px;top:136px;width:4px;height:11px;background:#00c000"></div>
<div class="abs" style="left:120px;top:136px;width:4px;height:11px;background:#0000c0"></div>
<div class="abs" style="left:125px;top:136px;width:4px;height:11px;background:#00c000"></div>
<div class="abs" style="left:132px;top:136px;width:4px;height:11px;background:#00c000"></div>
<div class="abs" style="left:137px;top:136px;width:4px;height:11px;background:#00c000"></div>
<div class="abs" style="left:142px;top:136px;width:4px;height:11px;background:#00c000"></div>
<div class="abs" style="left:147px;top:136px;width:4px;height:11px;background:#00c000"></div>
<div class="abs" style="left:154px;top:136px;width:4px;height:11px;background:#0000c0"></div>
<div class="abs" style="left:159px;top:136px;width:4px;height:11px;background:#0000c0"></div>
<div class="abs" style="left:164px;top:136px;width:4px;height:11px;background:#00c000"></div>
<div class="abs" style="left:169px;top:136px;width:4px;height:11px;background:#00c000"></div>
<div class="abs" style="left:176px;top:136px;width:4px;height:11px;background:#00c000"></div>
<div class="abs" style="left:181px;top:136px;width:4px;height:11px;background:#00c000"></div>
<div class="abs" style="left:186px;top:136px;width:4px;height:11px;background:#00c000"></div>
<div class="abs" style="left:191px;top:136px;width:4px;height:11px;background:#00c000"></div>
<div class="abs" style="left:198px;top:136px;width:4px;height:11px;background:#0000c0"></div>
<div class="abs" style="left:203px;top:136px;width:4px;height:11px;background:#00c000"></div>
<div class="abs" style="left:208px;top:136px;width:4px;height:11px;background:#0000c0"></div>
<div class="abs" style="left:213px;top:136px;width:4px;height:11px;background:#0000c0"></div>
<div class="abs" style="left:220px;top:136px;width:4px;height:11px;background:#0000c0"></div>
<div class="abs" style="left:225px;top:136px;width:4px;height:11px;background:#0000c0"></div>
<div class="abs" style="left:230px;top:136px;width:4px;height:11px;background:#00c000"></div>
<div class="abs" style="left:235px;top:136px;width:4px;height:11px;background:#00c000"></div>
<div class="abs" style="left:242px;top:136px;width:4px;height:11px;background:#00c000"></div>
<div class="abs" style="left:247px;top:136px;width:4px;height:11px;background:#00c000"></div>
<div class="abs" style="left:252px;top:136px;width:4px;height:11px;background:#00c000"></div>
<div class="abs" style="left:257px;top:136px;width:4px;height:11px;background:#00c000"></div>
<div class="abs" style="left:264px;top:136px;width:4px;height:11px;background:#00c000"></div>
<div class="abs" style="left:269px;top:136px;width:4px;height:11px;background:#00c000"></div>
<div class="abs" style="left:274px;top:136px;width:4px;height:11px;background:#00c000"></div>
<div class="abs" style="left:279px;top:136px;width:4px;height:11px;background:#00c000"></div>
</div></div>
<div id="status" class="abs" style="left:0;top:576px;width:916px;height:18px">
<div class="abs" style="left:0;top:0;width:916px;height:1px;background:#d7d7d7"></div>
<span style="left:-1px;top:5.6px;letter-spacing:-0.5px">Ready</span>
<div class="abs" style="left:121px;top:4px;width:225px;height:20px;border:1px solid #c4c4c4;border-right-color:#fff;border-bottom-color:#fff"></div>
<div class="abs" style="left:357px;top:4px;width:226px;height:20px;border:1px solid #c4c4c4;border-right-color:#fff;border-bottom-color:#fff"></div>
<div class="abs" style="left:601px;top:4px;width:115px;height:20px;border:1px solid #c4c4c4;border-right-color:#fff;border-bottom-color:#fff"></div>
<div class="abs" style="left:719px;top:4px;width:105px;height:20px;border:1px solid #c4c4c4;border-right-color:#fff;border-bottom-color:#fff"></div>
<div class="abs" style="left:828px;top:4px;width:81px;height:20px;border:1px solid #c4c4c4;border-right-color:#fff;border-bottom-color:#fff"></div>
<svg class="abs" style="left:124px;top:8px" width="15" height="9" viewBox="0 0 15 9"><path d="M0 4.5h2M2 1.5h3.5v6H2zM5.5 3h1.5M5.5 6h1.5M8 1.5h3.5a1 1 0 0 1 0 6H8zM12.5 4.5H15" stroke="#000" stroke-width="1.3" fill="none"/></svg>
<span style="left:143px;top:5.6px">NTRIP client: Not connected</span>
<svg class="abs" style="left:360px;top:8px" width="15" height="9" viewBox="0 0 15 9"><path d="M0 4.5h2M2 1.5h3.5v6H2zM5.5 3h1.5M5.5 6h1.5M8 1.5h3.5a1 1 0 0 1 0 6H8zM12.5 4.5H15" stroke="#000" stroke-width="1.3" fill="none"/></svg>
<span style="left:379px;top:5.6px">MQTT client: Not connected</span>
<span style="left:604px;top:5.6px">u-blox Generation 9</span>
<svg class="abs" style="left:722px;top:9px" width="16" height="8" viewBox="0 0 17 8"><path d="M0 4h17" stroke="#000" stroke-width="1.5"/><rect x="4" y="0.5" width="9" height="7" rx="1.5" fill="#00a000" stroke="#003000" stroke-width="1"/><path d="M7 1v6M10 1v6" stroke="#003000" stroke-width="1"/></svg>
<span style="left:742px;top:5.6px">COM1 9600</span>
<span style="left:830px;top:5.6px">No file open</span>
<svg class="abs" style="left:903px;top:5px" width="13" height="13" viewBox="0 0 13 13"><path d="M12 1L1 12M12 5L5 12M12 9L9 12" stroke="#b0b0b0" stroke-width="1.2"/></svg>
</div>
</div></body></html>
